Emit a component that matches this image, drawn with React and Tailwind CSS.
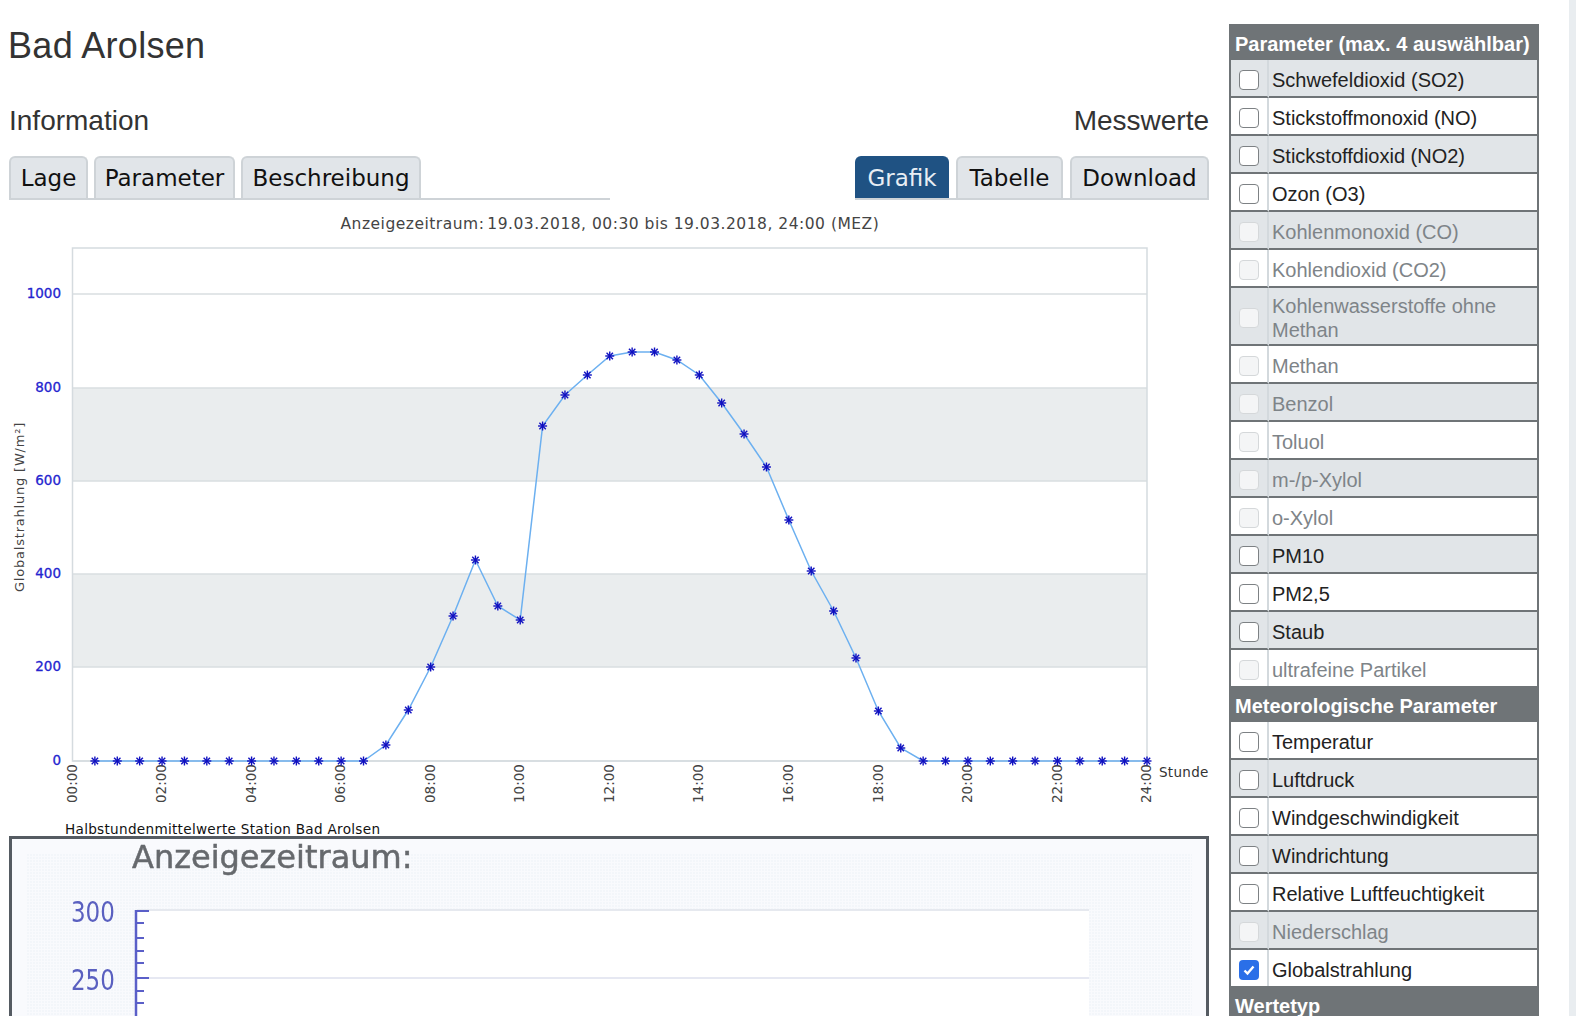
import React from 'react';

const SANS = 'font-["Liberation_Sans",Arial,sans-serif]';

const infoTabs = [
  { label: 'Lage', width: 'w-[79px]' },
  { label: 'Parameter', width: 'w-[141px]' },
  { label: 'Beschreibung', width: 'w-[180px]' },
];
const valueTabs = [
  { label: 'Grafik', width: 'w-[94px]' },
  { label: 'Tabelle', width: 'w-[107px]' },
  { label: 'Download', width: 'w-[139px]' },
];

const airParams = [
  { name: 'Schwefeldioxid (SO2)' },
  { name: 'Stickstoffmonoxid (NO)' },
  { name: 'Stickstoffdioxid (NO2)' },
  { name: 'Ozon (O3)' },
  { name: 'Kohlenmonoxid (CO)', disabled: true },
  { name: 'Kohlendioxid (CO2)', disabled: true },
  { name: 'Kohlenwasserstoffe ohne Methan', disabled: true, tall: true },
  { name: 'Methan', disabled: true },
  { name: 'Benzol', disabled: true },
  { name: 'Toluol', disabled: true },
  { name: 'm-/p-Xylol', disabled: true },
  { name: 'o-Xylol', disabled: true },
  { name: 'PM10' },
  { name: 'PM2,5' },
  { name: 'Staub' },
  { name: 'ultrafeine Partikel', disabled: true },
];

const meteoParams = [
  { name: 'Temperatur' },
  { name: 'Luftdruck' },
  { name: 'Windgeschwindigkeit' },
  { name: 'Windrichtung' },
  { name: 'Relative Luftfeuchtigkeit' },
  { name: 'Niederschlag', disabled: true },
  { name: 'Globalstrahlung', checked: true },
];

// y pixel of each half hour value, from 00:30 on
const curve = [
  761, 761, 761, 761, 761, 761, 761, 761, 761, 761, 761, 761, 761,
  745, 710, 667, 616, 560, 606, 620, 426, 395, 375, 356, 352, 352, 360, 375, 403,
  434, 467, 520, 571, 611, 658, 711, 748,
  761, 761, 761, 761, 761, 761, 761, 761, 761, 761, 761, 761, 761,
].slice(0, 48);

const PLOT_LEFT = 72.5;
const PLOT_RIGHT = 1147;
const PLOT_BOTTOM = 761;
const STEP = (PLOT_RIGHT - PLOT_LEFT) / 48;
const TOP = 216; // page y of the chart's svg

const points = curve.map((y, i) => ({ x: PLOT_LEFT + (i + 1) * STEP, y: y - TOP }));
const yTicks = [
  { label: '1000', y: 294 },
  { label: '800', y: 388 },
  { label: '600', y: 481 },
  { label: '400', y: 574 },
  { label: '200', y: 667 },
  { label: '0', y: 761 },
];
const xTicks = ['00:00', '02:00', '04:00', '06:00', '08:00', '10:00', '12:00', '14:00', '16:00', '18:00', '20:00', '22:00', '24:00'];

const Tab = ({ label, width, active }) => (
  <div
    className={`${width} h-[42px] flex items-center justify-center rounded-t-[6px] border-2 border-b-0 font-["DejaVu_Sans",sans-serif] text-[23px] ${
      active ? 'bg-[#1f5283] border-[#1f5283] text-[#e8eef4]' : 'bg-[#e1e5e9] border-[#ced3d7] text-[#111]'
    }`}
  >
    {label}
  </div>
);

const Star = ({ x, y }) => (
  <g stroke="#1010c0" strokeWidth="1.4">
    <line x1={x - 4.5} y1={y} x2={x + 4.5} y2={y} />
    <line x1={x} y1={y - 4.5} x2={x} y2={y + 4.5} />
    <line x1={x - 3.2} y1={y - 3.2} x2={x + 3.2} y2={y + 3.2} />
    <line x1={x - 3.2} y1={y + 3.2} x2={x + 3.2} y2={y - 3.2} />
  </g>
);

const Chart = () => (
  <svg width="1215" height="620" className="block overflow-visible" style={{ fontFamily: '"DejaVu Sans", sans-serif' }}>
    <text x="340.5" y="13" fontSize="15.5" letterSpacing="0.5" fill="#444">
      Anzeigezeitraum:<tspan dx="3">19.03.2018, 00:30 bis 19.03.2018, 24:00 (MEZ)</tspan>
    </text>

    {/* bands and grid */}
    <rect x={PLOT_LEFT} y={388 - TOP} width={PLOT_RIGHT - PLOT_LEFT} height="93" fill="#eaedee" />
    <rect x={PLOT_LEFT} y={574 - TOP} width={PLOT_RIGHT - PLOT_LEFT} height="93" fill="#eaedee" />
    {yTicks.map((t) => (
      <line key={t.label} x1={PLOT_LEFT} x2={PLOT_RIGHT} y1={t.y - TOP} y2={t.y - TOP} stroke="#d9dee1" strokeWidth="1.5" />
    ))}
    <rect x={PLOT_LEFT} y={248 - TOP} width={PLOT_RIGHT - PLOT_LEFT} height={PLOT_BOTTOM - 248} fill="none" stroke="#d5dbdf" strokeWidth="1.5" />

    {yTicks.map((t) => (
      <text key={t.label} x="61" y={t.y - TOP + 4} textAnchor="end" fontSize="13.5" fill="#2424cf" stroke="#2424cf" strokeWidth="0.3">
        {t.label}
      </text>
    ))}
    <text transform={`translate(24 ${507 - TOP}) rotate(-90)`} textAnchor="middle" fontSize="13" letterSpacing="0.8" fill="#444">
      Globalstrahlung [W/m²]
    </text>

    {xTicks.map((label, i) => (
      <text
        key={label}
        transform={`translate(${PLOT_LEFT + i * 4 * STEP + 4.2} ${803 - TOP}) rotate(-90)`}
        fontSize="13.5"
        fill="#444"
      >
        {label}
      </text>
    ))}
    <text x="1159" y={777 - TOP} fontSize="13.5" letterSpacing="0.3" fill="#333">Stunde</text>

    <polyline points={points.map((p) => `${p.x},${p.y}`).join(' ')} fill="none" stroke="#6cb0f0" strokeWidth="1.5" />
    {points.map((p, i) => (
      <Star key={i} x={p.x} y={p.y} />
    ))}

    <text x="65" y={834 - TOP} fontSize="13.6" letterSpacing="0.29" fill="#111">
      Halbstundenmittelwerte Station Bad Arolsen
    </text>
  </svg>
);

// the blurry old chart image below the real one
const OldChart = () => (
  <div className="w-[1200px] ml-[9px] h-[200px] border-[3px] border-b-0 border-[#555b62] bg-[#f9fafd] overflow-hidden">
    <svg width="1194" height="180" className="block blur-[0.7px]" style={{ fontFamily: '"DejaVu Sans", sans-serif' }}>
      <defs>
        <pattern id="dots" width="3" height="3" patternUnits="userSpaceOnUse">
          <rect width="2" height="2" fill="#f3f6fa" />
        </pattern>
      </defs>
      <rect x="14" y="14" width="1166" height="170" fill="url(#dots)" />
      <rect x="125" y="72" width="952" height="110" fill="#ffffff" />
      <line x1="125" x2="1077" y1="71" y2="71" stroke="#e6e9ef" strokeWidth="2" />
      <line x1="125" x2="1077" y1="139" y2="139" stroke="#e6e8f2" strokeWidth="2" />
      <text x="120" y="29" fontSize="32" fill="#66696d" stroke="#66696d" strokeWidth="0.5">Anzeigezeitraum:</text>
      <text transform="translate(59 83) scale(1 1.25)" fontSize="23" fill="#5a60c0">300</text>
      <text transform="translate(59 151) scale(1 1.25)" fontSize="23" fill="#5a60c0">250</text>
      <line x1="124" x2="124" y1="71" y2="185" stroke="#5a5fc8" strokeWidth="2.5" />
      {[72, 139].map((y) => (
        <line key={y} x1="124" x2="137" y1={y} y2={y} stroke="#5a5fc8" strokeWidth="2" />
      ))}
      {[84, 99, 112, 124, 152, 164].map((y) => (
        <line key={y} x1="124" x2="132" y1={y} y2={y} stroke="#5a5fc8" strokeWidth="2" />
      ))}
    </svg>
  </div>
);

const Checkbox = ({ checked, disabled }) => {
  if (checked) {
    return (
      <span className="w-5 h-5 rounded-[4px] bg-[#2a6fe8] flex items-center justify-center">
        <svg width="14" height="14" viewBox="0 0 14 14" fill="none" stroke="#fff" strokeWidth="2.4">
          <path d="M2.5 7.5l3 3 6-7" />
        </svg>
      </span>
    );
  }
  return (
    <span
      className={`w-5 h-5 rounded-[4px] border ${
        disabled ? 'border-[#d5d8da] bg-[#f4f5f6]' : 'border-[#7d8184] bg-white'
      }`}
    />
  );
};

const ParamRow = ({ param, shaded, last }) => {
  const rowLine = last ? '' : 'border-b-2 border-b-[#6f7477]';
  const height = param.tall ? 'h-[58px]' : last ? 'h-[36px]' : 'h-[38px]';
  return (
    <div className={`flex ${height} ${shaded ? 'bg-[#e1e5e8]' : 'bg-white'}`}>
      <div className={`w-[38px] shrink-0 flex items-center justify-center pt-[4px] border-r-2 border-r-[#d3d9dd] ${rowLine}`}>
        <Checkbox checked={param.checked} disabled={param.disabled} />
      </div>
      <div
        className={`flex-1 flex items-center pt-[4px] pl-[3px] pr-3 text-[20px] leading-[24px] ${rowLine} ${
          param.disabled ? 'text-[#7e8488]' : 'text-[#222]'
        }`}
      >
        {param.name}
      </div>
    </div>
  );
};

const SectionHead = ({ title }) => (
  <div className="h-[36px] pt-[3px] flex items-center bg-[#6f7477] text-white font-bold text-[20px] pl-[4px] whitespace-nowrap">
    {title}
  </div>
);

const App = () => {
  return (
    <div className={`flex h-[1016px] overflow-hidden bg-white ${SANS}`}>
      <div className="w-[1229px] shrink-0">
        <h1 className="pl-[8px] pt-[25px] h-[100px] text-[36px] leading-[42px] tracking-[0.3px] text-[#333]">Bad Arolsen</h1>

        <div className="flex justify-between w-[1209px] pl-[9px] pt-[1px] h-[56px] text-[28px] leading-[40px] text-[#333]">
          <h2>Information</h2>
          <h2>Messwerte</h2>
        </div>

        <div className="flex justify-between w-[1209px] pl-[9px]">
          <div className="w-[601px] flex gap-[6px] border-b-2 border-[#ced3d7]">
            {infoTabs.map((t) => (
              <Tab key={t.label} label={t.label} width={t.width} />
            ))}
          </div>
          <div className="flex gap-[7px] border-b-2 border-[#ced3d7]">
            {valueTabs.map((t) => (
              <Tab key={t.label} label={t.label} width={t.width} active={t.label === 'Grafik'} />
            ))}
          </div>
        </div>

        <div className="mt-[16px]">
          <Chart />
        </div>
        <OldChart />
      </div>

      <div className="w-[310px] mt-[24px] shrink-0 border-x-2 border-[#6f7477]">
        <SectionHead title="Parameter (max. 4 auswählbar)" />
        {airParams.map((p, i) => (
          <ParamRow key={p.name} param={p} shaded={i % 2 === 0} last={i === airParams.length - 1} />
        ))}
        <SectionHead title="Meteorologische Parameter" />
        {meteoParams.map((p, i) => (
          <ParamRow key={p.name} param={p} shaded={i % 2 === 1} last={i === meteoParams.length - 1} />
        ))}
        <SectionHead title="Wertetyp" />
      </div>

      <div className="ml-auto w-[7px] bg-[#e9edf0]" />
    </div>
  );
};

export default App;
